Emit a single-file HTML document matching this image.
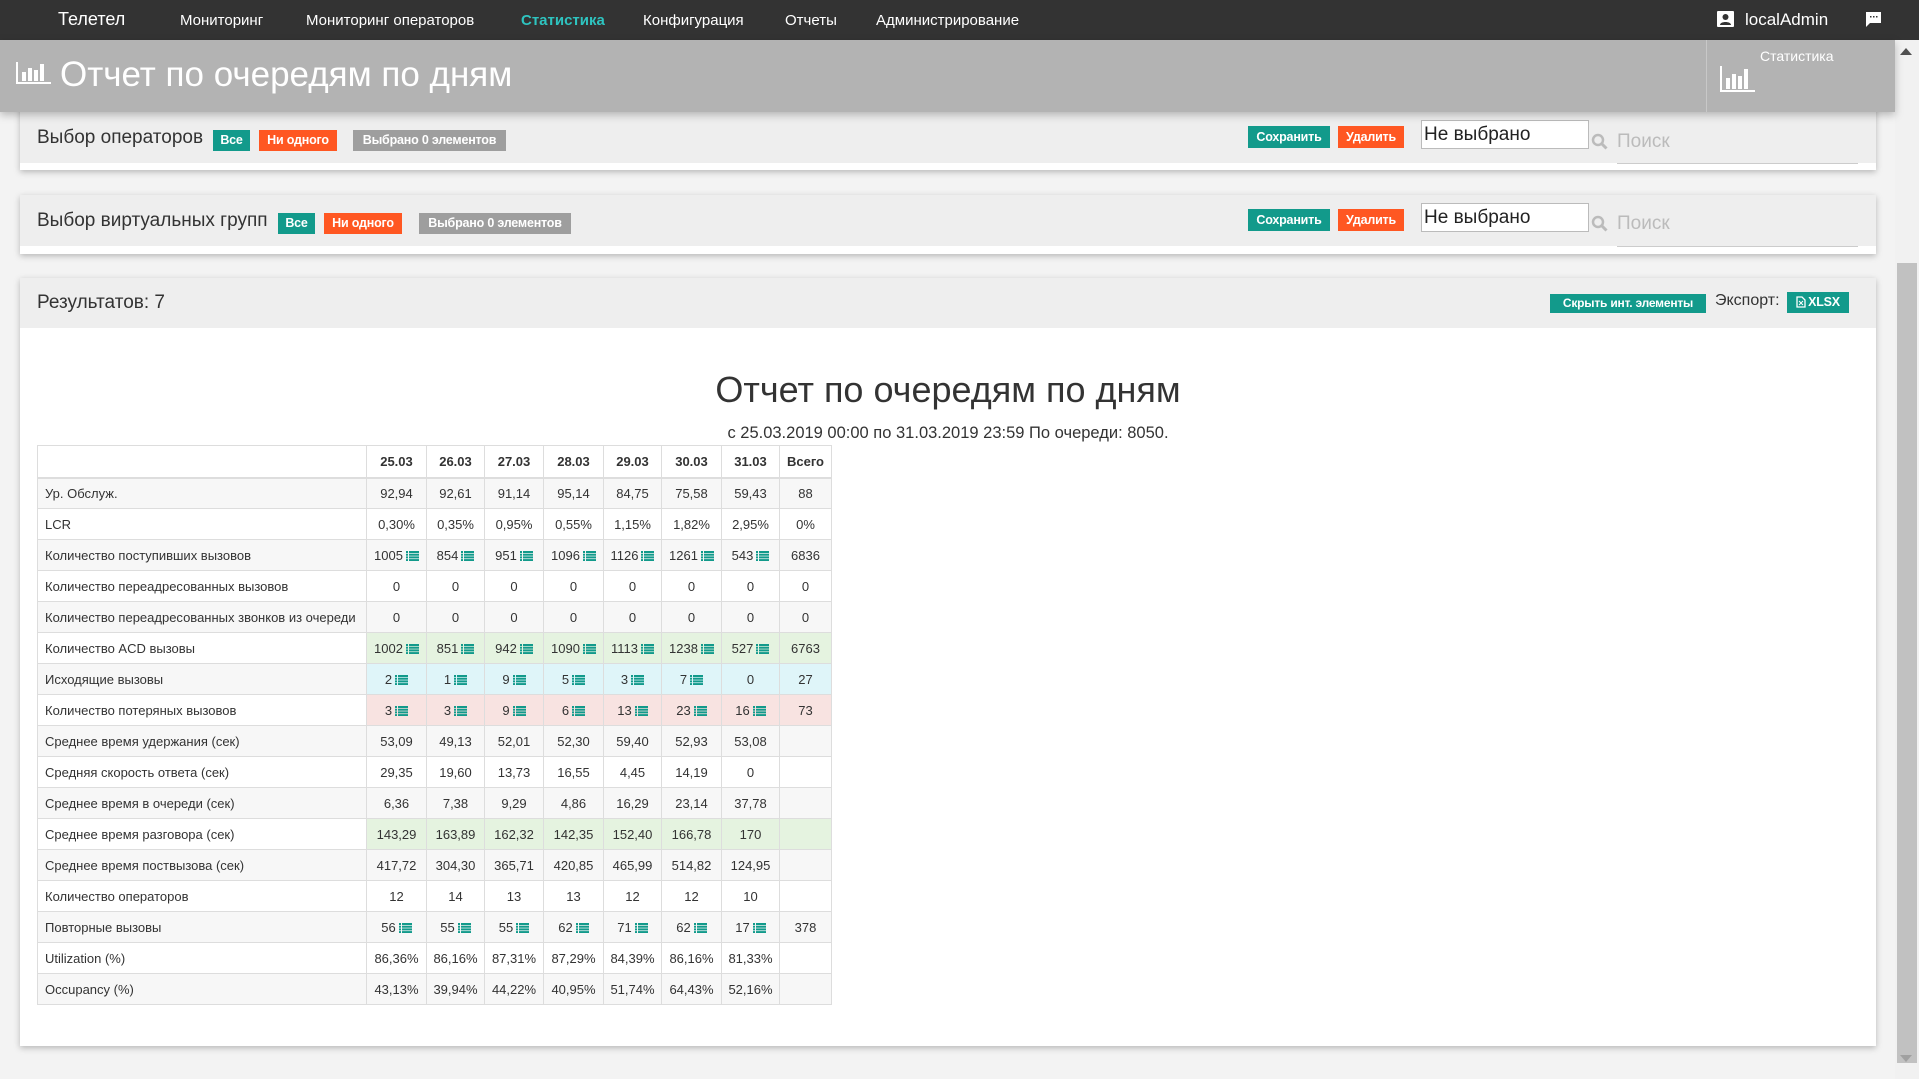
<!DOCTYPE html>
<html><head><meta charset="utf-8"><style>
*{box-sizing:border-box;margin:0;padding:0}
body{width:1919px;height:1079px;overflow:hidden;background:#f3f3f3;font-family:"Liberation Sans",Arial,sans-serif;color:#333;position:relative}
.abs{position:absolute}
.nav{left:0;top:0;width:1919px;height:40px;background:#333}
.nav span{position:absolute;top:12px;color:#fff;font-size:15px;white-space:nowrap}
.tb{left:0;top:40px;width:1895px;height:72px;background:#b3b3b3;box-shadow:0 3px 8px rgba(0,0,0,.25);z-index:5}
.panel{left:20px;width:1856px;background:#fff;box-shadow:0 2px 6px rgba(0,0,0,.25)}
.ph{background:#eee}
.lbl{font-size:19px;color:#333;white-space:nowrap}
.b{position:absolute;height:21px;color:#fff;font-size:12.5px;font-weight:bold;line-height:21px;text-align:center;white-space:nowrap;letter-spacing:-0.2px}
.g{background:#129a8b}.o{background:#ff5722}.s{background:#9e9e9e}
.inp{position:absolute;width:168px;height:29px;border:1px solid #bbb;background:#fff;font-size:19px;line-height:27px;padding-left:2px;color:#222}
.srch{position:absolute;font-size:19px;color:#bbb}
.ul{position:absolute;height:1px;background:#ccc;width:241px}
table{border-collapse:collapse;font-size:13px;table-layout:fixed}
td{border:1px solid #ddd;height:31px;text-align:center;color:#333;padding:0;white-space:nowrap}
td:first-child{text-align:left;padding-left:7px}
tr.st td{background:#f7f7f7}
th{border:1px solid #ddd;border-bottom:2px solid #ddd;height:32px;font-weight:bold;font-size:13px;color:#333}
.gr{background:#e5f3e0!important}.bl{background:#dff5f9!important}.pk{background:#f8e3e1!important}
svg.l{display:inline-block;margin-left:3px;vertical-align:-1px}
</style></head><body>
<svg width="0" height="0" style="position:absolute"><defs><g id="li" fill="#129a8b"><rect x="0" y="0" width="2" height="2"/><rect x="3" y="0" width="10" height="2"/><rect x="0" y="2.7" width="2" height="2"/><rect x="3" y="2.7" width="10" height="2"/><rect x="0" y="5.4" width="2" height="2"/><rect x="3" y="5.4" width="10" height="2"/><rect x="0" y="8.1" width="2" height="2"/><rect x="3" y="8.1" width="10" height="2"/></g></defs></svg>
<div class="abs nav">
<span style="left:58px;font-size:18px;top:9px">Телетел</span>
<span style="left:180px">Мониторинг</span>
<span style="left:306px">Мониторинг операторов</span>
<span style="left:521px;color:#2ec4c0;font-weight:bold">Статистика</span>
<span style="left:643px">Конфигурация</span>
<span style="left:785px">Отчеты</span>
<span style="left:876px">Администрирование</span>
<svg class="abs" style="left:1717px;top:11px" width="17" height="16"><rect width="17" height="16" rx="1" fill="#fff"/><circle cx="8.5" cy="6" r="3" fill="#333"/><path d="M3 14c0-4 11-4 11 0z" fill="#333"/></svg>
<span style="left:1745px;font-size:17px;top:10px">localAdmin</span>
<svg class="abs" style="left:1866px;top:12px" width="15" height="15"><path d="M0 0h15v11H4l-4 4z" fill="#fff"/><rect x="4" y="4" width="1.5" height="1.5" fill="#333"/><rect x="7" y="4" width="1.5" height="1.5" fill="#333"/><rect x="10" y="4" width="1.5" height="1.5" fill="#333"/></svg>
</div>
<div class="abs tb">
<svg class="abs" style="left:16px;top:22px" width="36" height="22"><path d="M1 0v21h34" stroke="#fff" stroke-width="2" fill="none"/><rect x="6" y="10" width="4" height="9" fill="#fff"/><rect x="12" y="6" width="4" height="13" fill="#fff"/><rect x="18" y="8" width="4" height="11" fill="#fff"/><rect x="24" y="2" width="4" height="17" fill="#fff"/></svg>
<div class="abs" style="left:60px;top:15px;font-size:35px;color:#fff;white-space:nowrap">Отчет по очередям по дням</div>
<div class="abs" style="left:1706px;top:0;width:1px;height:72px;background:#c8c8c8"></div>
<div class="abs" style="left:1760px;top:8px;font-size:14px;color:#fff">Статистика</div>
<svg class="abs" style="left:1720px;top:26px" width="36" height="26"><path d="M1 0v25h34" stroke="#fff" stroke-width="2" fill="none"/><rect x="6" y="12" width="4" height="11" fill="#fff"/><rect x="12" y="8" width="4" height="15" fill="#fff"/><rect x="18" y="10" width="4" height="13" fill="#fff"/><rect x="24" y="3" width="4" height="20" fill="#fff"/></svg>
</div>
<div class="abs" style="left:1895px;top:40px;width:24px;height:1039px;background:#f1f1f1"></div>
<div class="abs" style="left:1897px;top:263px;width:20px;height:800px;background:#c1c1c1"></div>
<div class="abs" style="left:1900px;top:48px;width:0;height:0;border-left:6px solid transparent;border-right:6px solid transparent;border-bottom:7px solid #505050"></div>
<div class="abs" style="left:1900px;top:1055px;width:0;height:0;border-left:6px solid transparent;border-right:6px solid transparent;border-top:7px solid #a0a0a0"></div>

<div class="abs panel" style="top:100px;height:70px"><div class="ph" style="height:63px"></div></div>
<div class="abs lbl" style="left:37px;top:127px">Выбор операторов</div>
<div class="b g" style="left:213px;top:130px;width:37px">Все</div>
<div class="b o" style="left:259px;top:130px;width:78px">Ни одного</div>
<div class="b s" style="left:353px;top:130px;width:153px">Выбрано 0 элементов</div>
<div class="b g" style="left:1248px;top:126px;width:82px;height:22px;line-height:22px">Сохранить</div>
<div class="b o" style="left:1338px;top:126px;width:66px;height:22px;line-height:22px">Удалить</div>
<div class="inp" style="left:1421px;top:120px">Не выбрано</div>
<svg class="abs" style="left:1591px;top:133px" width="17" height="17"><circle cx="7" cy="7" r="5" stroke="#bbb" stroke-width="2.5" fill="none"/><path d="M10.5 10.5l5 5" stroke="#bbb" stroke-width="3"/></svg>
<div class="srch" style="left:1617px;top:131px">Поиск</div>
<div class="ul" style="left:1617px;top:163px"></div>

<div class="abs panel" style="top:195px;height:59px"><div class="ph" style="height:51px"></div></div>
<div class="abs lbl" style="left:37px;top:210px">Выбор виртуальных групп</div>
<div class="b g" style="left:278px;top:213px;width:37px">Все</div>
<div class="b o" style="left:324px;top:213px;width:78px">Ни одного</div>
<div class="b s" style="left:419px;top:213px;width:152px">Выбрано 0 элементов</div>
<div class="b g" style="left:1248px;top:209px;width:82px;height:22px;line-height:22px">Сохранить</div>
<div class="b o" style="left:1338px;top:209px;width:66px;height:22px;line-height:22px">Удалить</div>
<div class="inp" style="left:1421px;top:203px">Не выбрано</div>
<svg class="abs" style="left:1591px;top:215px" width="17" height="17"><circle cx="7" cy="7" r="5" stroke="#bbb" stroke-width="2.5" fill="none"/><path d="M10.5 10.5l5 5" stroke="#bbb" stroke-width="3"/></svg>
<div class="srch" style="left:1617px;top:213px">Поиск</div>
<div class="ul" style="left:1617px;top:246px"></div>

<div class="abs panel" style="top:278px;height:768px"><div class="ph" style="height:50px"></div></div>
<div class="abs" style="left:37px;top:292px;font-size:19px">Результатов: 7</div>
<div class="b g" style="left:1550px;top:294px;width:156px;height:19px;line-height:19px;font-size:12px">Скрыть инт. элементы</div>
<div class="abs" style="left:1715px;top:292px;font-size:16px">Экспорт:</div>
<div class="b g" style="left:1787px;top:292px;width:62px;height:21px;font-size:12.5px"><svg width="10" height="12" style="vertical-align:-2px;margin-right:2px"><path d="M1 1h5l3 3v7H1z" fill="none" stroke="#fff" stroke-width="1.3"/><path d="M3 5l4 4M7 5l-4 4" stroke="#fff" stroke-width="1"/></svg>XLSX</div>
<div class="abs" style="left:20px;top:369px;width:1856px;text-align:center;font-size:36px;color:#333">Отчет по очередям по дням</div>
<div class="abs" style="left:20px;top:424px;width:1856px;text-align:center;font-size:16.5px;color:#333">с 25.03.2019 00:00 по 31.03.2019 23:59 По очереди: 8050.</div>

<table class="abs" style="left:37px;top:445px;width:794px">
<colgroup><col style="width:329px"><col style="width:60px"><col style="width:58px"><col style="width:59px"><col style="width:60px"><col style="width:58px"><col style="width:60px"><col style="width:58px"><col style="width:52px"></colgroup>
<tr><th></th><th>25.03</th><th>26.03</th><th>27.03</th><th>28.03</th><th>29.03</th><th>30.03</th><th>31.03</th><th>Всего</th></tr>
<tr class="st"><td>Ур. Обслуж.</td><td>92,94</td><td>92,61</td><td>91,14</td><td>95,14</td><td>84,75</td><td>75,58</td><td>59,43</td><td>88</td></tr>
<tr><td>LCR</td><td>0,30%</td><td>0,35%</td><td>0,95%</td><td>0,55%</td><td>1,15%</td><td>1,82%</td><td>2,95%</td><td>0%</td></tr>
<tr class="st"><td>Количество поступивших вызовов</td><td>1005<svg class="l" width="13" height="10"><use href="#li"/></svg></td><td>854<svg class="l" width="13" height="10"><use href="#li"/></svg></td><td>951<svg class="l" width="13" height="10"><use href="#li"/></svg></td><td>1096<svg class="l" width="13" height="10"><use href="#li"/></svg></td><td>1126<svg class="l" width="13" height="10"><use href="#li"/></svg></td><td>1261<svg class="l" width="13" height="10"><use href="#li"/></svg></td><td>543<svg class="l" width="13" height="10"><use href="#li"/></svg></td><td>6836</td></tr>
<tr><td>Количество переадресованных вызовов</td><td>0</td><td>0</td><td>0</td><td>0</td><td>0</td><td>0</td><td>0</td><td>0</td></tr>
<tr class="st"><td>Количество переадресованных звонков из очереди</td><td>0</td><td>0</td><td>0</td><td>0</td><td>0</td><td>0</td><td>0</td><td>0</td></tr>
<tr><td>Количество ACD вызовы</td><td class="gr">1002<svg class="l" width="13" height="10"><use href="#li"/></svg></td><td class="gr">851<svg class="l" width="13" height="10"><use href="#li"/></svg></td><td class="gr">942<svg class="l" width="13" height="10"><use href="#li"/></svg></td><td class="gr">1090<svg class="l" width="13" height="10"><use href="#li"/></svg></td><td class="gr">1113<svg class="l" width="13" height="10"><use href="#li"/></svg></td><td class="gr">1238<svg class="l" width="13" height="10"><use href="#li"/></svg></td><td class="gr">527<svg class="l" width="13" height="10"><use href="#li"/></svg></td><td class="gr">6763</td></tr>
<tr class="st"><td>Исходящие вызовы</td><td class="bl">2<svg class="l" width="13" height="10"><use href="#li"/></svg></td><td class="bl">1<svg class="l" width="13" height="10"><use href="#li"/></svg></td><td class="bl">9<svg class="l" width="13" height="10"><use href="#li"/></svg></td><td class="bl">5<svg class="l" width="13" height="10"><use href="#li"/></svg></td><td class="bl">3<svg class="l" width="13" height="10"><use href="#li"/></svg></td><td class="bl">7<svg class="l" width="13" height="10"><use href="#li"/></svg></td><td class="bl">0</td><td class="bl">27</td></tr>
<tr><td>Количество потеряных вызовов</td><td class="pk">3<svg class="l" width="13" height="10"><use href="#li"/></svg></td><td class="pk">3<svg class="l" width="13" height="10"><use href="#li"/></svg></td><td class="pk">9<svg class="l" width="13" height="10"><use href="#li"/></svg></td><td class="pk">6<svg class="l" width="13" height="10"><use href="#li"/></svg></td><td class="pk">13<svg class="l" width="13" height="10"><use href="#li"/></svg></td><td class="pk">23<svg class="l" width="13" height="10"><use href="#li"/></svg></td><td class="pk">16<svg class="l" width="13" height="10"><use href="#li"/></svg></td><td class="pk">73</td></tr>
<tr class="st"><td>Среднее время удержания (сек)</td><td>53,09</td><td>49,13</td><td>52,01</td><td>52,30</td><td>59,40</td><td>52,93</td><td>53,08</td><td></td></tr>
<tr><td>Средняя скорость ответа (сек)</td><td>29,35</td><td>19,60</td><td>13,73</td><td>16,55</td><td>4,45</td><td>14,19</td><td>0</td><td></td></tr>
<tr class="st"><td>Среднее время в очереди (сек)</td><td>6,36</td><td>7,38</td><td>9,29</td><td>4,86</td><td>16,29</td><td>23,14</td><td>37,78</td><td></td></tr>
<tr><td>Среднее время разговора (сек)</td><td class="gr">143,29</td><td class="gr">163,89</td><td class="gr">162,32</td><td class="gr">142,35</td><td class="gr">152,40</td><td class="gr">166,78</td><td class="gr">170</td><td class="gr"></td></tr>
<tr class="st"><td>Среднее время поствызова (сек)</td><td>417,72</td><td>304,30</td><td>365,71</td><td>420,85</td><td>465,99</td><td>514,82</td><td>124,95</td><td></td></tr>
<tr><td>Количество операторов</td><td>12</td><td>14</td><td>13</td><td>13</td><td>12</td><td>12</td><td>10</td><td></td></tr>
<tr class="st"><td>Повторные вызовы</td><td>56<svg class="l" width="13" height="10"><use href="#li"/></svg></td><td>55<svg class="l" width="13" height="10"><use href="#li"/></svg></td><td>55<svg class="l" width="13" height="10"><use href="#li"/></svg></td><td>62<svg class="l" width="13" height="10"><use href="#li"/></svg></td><td>71<svg class="l" width="13" height="10"><use href="#li"/></svg></td><td>62<svg class="l" width="13" height="10"><use href="#li"/></svg></td><td>17<svg class="l" width="13" height="10"><use href="#li"/></svg></td><td>378</td></tr>
<tr><td>Utilization (%)</td><td>86,36%</td><td>86,16%</td><td>87,31%</td><td>87,29%</td><td>84,39%</td><td>86,16%</td><td>81,33%</td><td></td></tr>
<tr class="st"><td>Occupancy (%)</td><td>43,13%</td><td>39,94%</td><td>44,22%</td><td>40,95%</td><td>51,74%</td><td>64,43%</td><td>52,16%</td><td></td></tr>
</table>
</body></html>
